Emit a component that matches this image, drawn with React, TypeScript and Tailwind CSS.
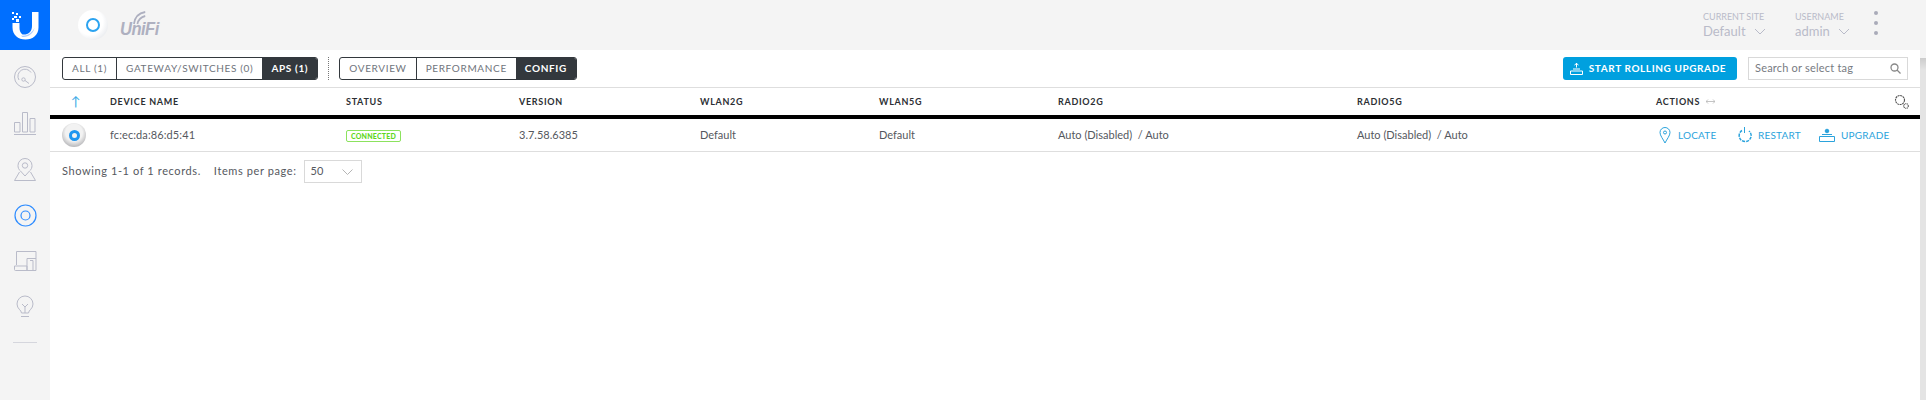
const columns = "grid grid-cols-[60px_236px_173px_181px_179px_179px_299px_299px_1fr]";

const headers = ["DEVICE NAME", "STATUS", "VERSION", "WLAN2G", "WLAN5G", "RADIO2G", "RADIO5G"];

function ULogo() {
  return (
    <svg width="27" height="29" viewBox="0 0 27 29" fill="none">
      <path d="M0.500 12h7v5c0 3 1 5 3 6.500 6 .5 9.500-3 9.500-8.500V1h6.500v15.500C26.500 24 21 28.500 13.500 28.500S.500 24 .500 16.500z" fill="#fff" />
      <path d="M8.500 24.500c6 1 11-2 14-7.500-1 5-6 9.500-12 9z" fill="#a9cbff" />
      <rect x="0" y="1" width="2" height="2" fill="#fff" />
      <rect x="4" y="2" width="2" height="2" fill="#fff" />
      <rect x="2" y="5" width="3" height="2" fill="#fff" />
      <rect x="7" y="5" width="2" height="2" fill="#fff" />
      <rect x="0" y="7" width="2" height="2" fill="#fff" />
      <rect x="4" y="8" width="3" height="3" fill="#fff" />
    </svg>
  );
}

function NavIcon({ children }: { children: React.ReactNode }) {
  return (
    <div className="flex h-[46px] items-center justify-center">
      <svg width="24" height="24" viewBox="0 0 24 24" fill="none" stroke="#b9bbc9" strokeWidth="1">
        {children}
      </svg>
    </div>
  );
}

function Sidebar() {
  return (
    <div className="flex w-[50px] shrink-0 flex-col bg-[#f4f4f4]">
      <div className="flex h-[50px] items-center justify-center bg-[#006fff]">
        <ULogo />
      </div>
      <div className="flex flex-col pt-[4px]">
        <NavIcon>
          <circle cx="12" cy="12" r="10.500" />
          <path d="M6 15a7 7 0 0 1 12-7.500" />
          <circle cx="10.500" cy="14.500" r="1.700" />
          <path d="M12 15.500l4 3" />
        </NavIcon>
        <NavIcon>
          <path d="M1 23.500h22M1.500 11.500h5.500v9.500H1.500zM9.500 1.500h5v19.500h-5zM17 7.500h5v13.500h-5z" />
        </NavIcon>
        <NavIcon>
          <path d="M7.500 14C5.500 12.500 5 10.500 5 8.500a7 7 0 0 1 14 0c0 2-.5 4-2.500 5.500L12 19z" />
          <circle cx="12" cy="8.500" r="2.700" />
          <path d="M6.500 15l-5 8.500h21l-5-8.500" />
        </NavIcon>
        <div className="flex h-[46px] items-center justify-center">
          <svg width="23" height="23" viewBox="0 0 23 23" fill="none" stroke="#2e8cff">
            <circle cx="11.500" cy="11.500" r="10.500" strokeWidth="1.200" />
            <circle cx="11.500" cy="11.500" r="4.500" strokeWidth="1.200" />
          </svg>
        </div>
        <NavIcon>
          <path d="M3.500 16V2.500h19.500v19h-9" />
          <path d="M14 21.500V9.500h9" />
          <path d="M1.500 17h12.500v4.500H2.500a1 1 0 0 1-1-1z" />
          <path d="M17 11.500h3v10" />
        </NavIcon>
        <NavIcon>
          <path d="M8.500 18c0-3-4.500-4-4.500-9a8 8 0 0 1 16 0c0 5-4.500 6-4.500 9z" />
          <path d="M12 18v-6l-3-3M12 12l3-3M8 21.500h8" />
        </NavIcon>
      </div>
      <div className="mx-[13px] mt-[12px] h-px bg-[#d5d6dd]" />
    </div>
  );
}

function TopBar() {
  return (
    <div className="flex h-[50px] items-center bg-[#f4f4f4] pl-[28px]">
      <div className="flex h-[30px] w-[30px] items-center justify-center rounded-full bg-[radial-gradient(circle_at_40%_40%,#ffffff_50%,#d8dce2_100%)]">
        <div className="h-[14px] w-[14px] rounded-full border-2 border-[#2ba3f0]" />
      </div>
      <div className="relative ml-[12px] mt-[6px] origin-left scale-x-[0.87] font-['Liberation_Sans',sans-serif] text-[19px] font-bold italic leading-none tracking-[-0.6px] text-[#aeb0c0]">
        UniFi
        <svg className="absolute left-[12px] top-[-9px]" width="24" height="15" viewBox="0 0 24 15" fill="none" stroke="#aeb0c0" strokeWidth="2">
          <path d="M4 14C5 7 10 3 17 2M8 14c1-4 4-7 9-8" />
        </svg>
      </div>
      <div className="ml-auto flex items-start pr-[48px] text-[#b9bbc9]">
        <div className="w-[92px]">
          <div className="text-[9px] leading-[12px]">CURRENT SITE</div>
          <div className="flex items-center text-[13px] leading-[17px]">
            Default
            <svg className="ml-[8px]" width="12" height="7" viewBox="0 0 12 7" fill="none" stroke="#b9bbc9">
              <path d="M1 1l5 5 5-5" />
            </svg>
          </div>
        </div>
        <div className="w-[79px]">
          <div className="text-[9px] leading-[12px]">USERNAME</div>
          <div className="flex items-center text-[13px] leading-[17px]">
            admin
            <svg className="ml-[8px]" width="12" height="7" viewBox="0 0 12 7" fill="none" stroke="#b9bbc9">
              <path d="M1 1l5 5 5-5" />
            </svg>
          </div>
        </div>
        <div className="flex flex-col gap-[6px]">
          <div className="h-[4px] w-[4px] rounded-full bg-[#a9abb9]" />
          <div className="h-[4px] w-[4px] rounded-full bg-[#a9abb9]" />
          <div className="h-[4px] w-[4px] rounded-full bg-[#a9abb9]" />
        </div>
      </div>
    </div>
  );
}

function Segmented({ items, active }: { items: string[]; active: string }) {
  return (
    <div className="flex h-[23px] overflow-hidden rounded-[3px] border border-[#33383d] text-[10px] tracking-[0.65px]">
      {items.map((item, i) => (
        <div
          key={item}
          className={
            item === active
              ? "flex items-center bg-[#33383d] px-[9px] font-bold text-white"
              : i === 0
                ? "flex items-center border-r border-[#33383d] px-[9px] text-[#70747c]"
                : "flex items-center px-[9px] text-[#70747c]"
          }
        >
          {item}
        </div>
      ))}
    </div>
  );
}

function Toolbar() {
  return (
    <div className="flex h-[38px] items-center border-b border-[#dedede] px-[12px]">
      <Segmented items={["ALL (1)", "GATEWAY/SWITCHES (0)", "APS (1)"]} active="APS (1)" />
      <div className="mx-[10px] h-[23px] border-l border-dotted border-[#777]" />
      <Segmented items={["OVERVIEW", "PERFORMANCE", "CONFIG"]} active="CONFIG" />
      <button className="ml-auto flex h-[23px] w-[174px] items-center justify-center gap-[6px] rounded-[3px] bg-[#00a0df] pr-[4px] text-[10px] font-bold tracking-[0.6px] text-white">
        <svg width="13" height="12" viewBox="0 0 13 12" fill="none" stroke="#fff">
          <path d="M6.500 0v4.500M4.500 2l2-1.500 2 1.500M3 6h7M.500 8h12v3.500H.500z" />
        </svg>
        START ROLLING UPGRADE
      </button>
      <div className="ml-[11px] flex h-[23px] w-[160px] items-center justify-between border border-[#d9d9d9] px-[6px] text-[11px] tracking-[0.2px] text-[#777b82]">
        Search or select tag
        <svg width="11" height="11" viewBox="0 0 11 11" fill="none" stroke="#888" strokeWidth="1.300">
          <circle cx="4.500" cy="4.500" r="3.500" />
          <path d="M7 7l3.500 3.500" />
        </svg>
      </div>
    </div>
  );
}

function Actions() {
  return (
    <div className="flex items-center pl-[3px] text-[10px] tracking-[0.2px] text-[#2ba3dc]">
      <svg width="12" height="17" viewBox="0 0 12 17" fill="none" stroke="#2ba3dc">
        <path d="M6 16C4 12 1 8.500 1 5.500a5 5 0 0 1 10 0C11 8.500 8 12 6 16z" />
        <circle cx="6" cy="5.500" r="1.500" />
      </svg>
      <span className="ml-[7px] w-[59px]">LOCATE</span>
      <svg width="15" height="16" viewBox="0 0 15 16" fill="none" stroke="#2ba3dc" strokeWidth="1.500">
        <path d="M5 3.500a6 6 0 1 0 7 .5" strokeDasharray="3 1" />
        <path d="M7.500 0v6" strokeWidth="1" />
      </svg>
      <span className="ml-[6px] w-[61px]">RESTART</span>
      <svg width="16" height="15" viewBox="0 0 16 15" fill="none" stroke="#2ba3dc">
        <path d="M.500 8.500h15v5H.500zM3 6.500h10" />
        <circle cx="8" cy="3" r="1.800" fill="#2ba3dc" />
      </svg>
      <span className="ml-[6px]">UPGRADE</span>
    </div>
  );
}

function DeviceTable() {
  return (
    <div>
      <div className={`${columns} h-[31px] items-center border-b-[4px] border-black text-[9px] font-bold tracking-[0.7px] text-[#2c2f33]`}>
        <div className="pl-[21px] text-[13px] font-normal leading-none text-[#3aa9e6]">↑</div>
        {headers.map((h) => (
          <div key={h}>{h}</div>
        ))}
        <div className="flex items-center justify-between pr-[11px]">
          <span className="flex items-center gap-[6px]">
            ACTIONS
            <svg width="9" height="5" viewBox="0 0 9 5" fill="none" stroke="#b5b5b5" strokeWidth="0.800">
              <path d="M0 2.500h9M2 .500l-2 2 2 2M7 .500l2 2-2 2" />
            </svg>
          </span>
          <svg width="15" height="15" viewBox="0 0 15 15" fill="none" stroke="#555" strokeWidth="1.100">
            <circle cx="6" cy="6" r="4.500" strokeDasharray="2 .6" />
            <circle cx="12" cy="12" r="2.300" strokeDasharray="1 .5" />
          </svg>
        </div>
      </div>
      <div className={`${columns} h-[33px] items-center border-b border-[#dedede] text-[11px] text-[#55585e]`}>
        <div className="pl-[12px]">
          <div className="flex h-[24px] w-[24px] items-center justify-center rounded-full bg-[radial-gradient(circle_at_50%_40%,#f2f2f2_45%,#a0a0a4_90%)]">
            <div className="h-[11px] w-[11px] rounded-full border-[3px] border-[#1f96f0]" />
          </div>
        </div>
        <div className="tracking-[0.1px]">fc:ec:da:86:d5:41</div>
        <div>
          <span className="inline-flex h-[12px] w-[55px] items-center justify-center rounded-[2px] border border-[#8ce25e] text-[7px] font-black tracking-[0.2px] text-[#5fd81e]">
            CONNECTED
          </span>
        </div>
        <div>3.7.58.6385</div>
        <div>Default</div>
        <div>Default</div>
        <div>Auto (Disabled)&nbsp; / Auto</div>
        <div>Auto (Disabled)&nbsp; / Auto</div>
        <Actions />
      </div>
    </div>
  );
}

function Pager() {
  return (
    <div className="flex items-center pl-[12px] pt-[8px] text-[11px] tracking-[0.6px] text-[#55585e]">
      <span>Showing 1-1 of 1 records.</span>
      <span className="ml-[13px]">Items per page:</span>
      <div className="ml-[7px] flex h-[23px] w-[58px] items-center justify-between border border-[#d9d9d9] pl-[6px] pr-[8px] tracking-normal">
        50
        <svg width="11" height="6" viewBox="0 0 11 6" fill="none" stroke="#b5b5b5">
          <path d="M.500 .500l5 5 5-5" />
        </svg>
      </div>
    </div>
  );
}

export default function App() {
  return (
    <div className="flex h-[400px] w-full overflow-hidden bg-white font-['Lato',sans-serif]">
      <Sidebar />
      <div className="flex min-w-0 flex-1 flex-col">
        <TopBar />
        <div className="flex flex-1">
          <div className="min-w-0 flex-1 bg-white">
            <Toolbar />
            <DeviceTable />
            <Pager />
          </div>
          <div className="w-[6px] bg-[linear-gradient(#f4f4f4_8px,#cccccc_8px,#e4e4e4_20px)]" />
        </div>
      </div>
    </div>
  );
}
